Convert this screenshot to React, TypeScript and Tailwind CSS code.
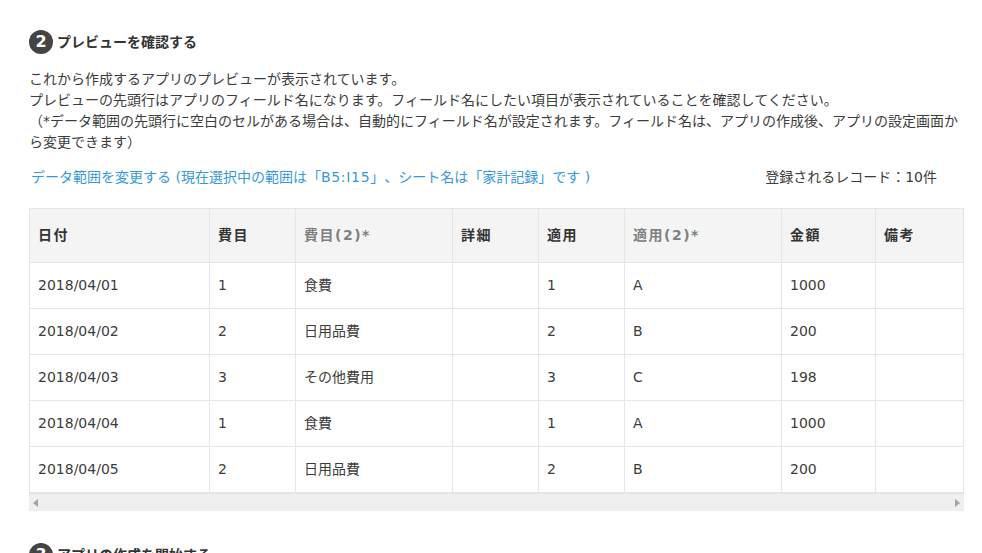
const font = "font-['DejaVu_Sans','Noto_Sans_CJK_JP',sans-serif]"

const columns = [
  { label: "日付", width: "w-[180px]" },
  { label: "費目", width: "w-[86px]" },
  { label: "費目(2)*", width: "w-[157px]", muted: true },
  { label: "詳細", width: "w-[86px]" },
  { label: "適用", width: "w-[86px]" },
  { label: "適用(2)*", width: "w-[157px]", muted: true },
  { label: "金額", width: "w-[94px]" },
  { label: "備考", width: "w-[88px]" },
]

const rows = [
  ["2018/04/01", "1", "食費", "", "1", "A", "1000", ""],
  ["2018/04/02", "2", "日用品費", "", "2", "B", "200", ""],
  ["2018/04/03", "3", "その他費用", "", "3", "C", "198", ""],
  ["2018/04/04", "1", "食費", "", "1", "A", "1000", ""],
  ["2018/04/05", "2", "日用品費", "", "2", "B", "200", ""],
]

function StepHeading({ n, title }: { n: number; title: string }) {
  return (
    <div className="flex items-center gap-1">
      <span className="flex h-6 w-6 items-center justify-center rounded-full bg-[#444444] text-base font-bold leading-none text-white">
        {n}
      </span>
      <h2 className="text-sm font-bold text-[#333333]">{title}</h2>
    </div>
  )
}

export default function App() {
  return (
    <div className={`h-[553px] overflow-hidden bg-white pl-[29px] pr-[18px] pt-[30px] text-sm text-[#3c3c3c] [text-spacing-trim:space-all] ${font}`}>
      <StepHeading n={2} title="プレビューを確認する" />

      <div className="mt-[15px] leading-[21px]">
        <p>これから作成するアプリのプレビューが表示されています。</p>
        <p>プレビューの先頭行はアプリのフィールド名になります。フィールド名にしたい項目が表示されていることを確認してください。</p>
        <p>（*データ範囲の先頭行に空白のセルがある場合は、自動的にフィールド名が設定されます。フィールド名は、アプリの作成後、アプリの設定画面から変更できます）</p>
      </div>

      <div className="mt-[14px] flex items-center justify-between pl-[2px] pr-[27px] leading-[21px]">
        <a className="text-[#3498db]">
          データ範囲を変更する (現在選択中の範囲は「<span className="tracking-[0.7px]">B5:I15</span>」、シート名は「家計記録」です )
        </a>
        <span>登録されるレコード：10件</span>
      </div>

      <div className="mt-[20px] w-[935px]">
        <table className="w-[934px] table-fixed border-collapse">
          <thead>
            <tr className="h-[54px] bg-[#f4f4f4]">
              {columns.map((col) => (
                <th
                  key={col.label}
                  className={`${col.width} border border-[#e6e6e6] px-2 pb-[1px] text-left font-bold tracking-[1.5px] ${col.muted ? "text-[#808080]" : "text-[#333333]"}`}
                >
                  {col.label}
                </th>
              ))}
            </tr>
          </thead>
          <tbody>
            {rows.map((row, i) => (
              <tr key={i} className="h-[46px]">
                {row.map((cell, j) => (
                  <td key={j} className="border border-[#e6e6e6] px-2 pb-[2px]">
                    {cell}
                  </td>
                ))}
              </tr>
            ))}
          </tbody>
        </table>
        <div className="flex h-[18px] items-center justify-between border-t border-[#e3e3e3] bg-[#efefef] px-1">
          <span className="h-0 w-0 border-y-[4px] border-r-[5px] border-y-transparent border-r-[#a3a3a3]" />
          <span className="h-0 w-0 border-y-[4px] border-l-[5px] border-y-transparent border-l-[#a3a3a3]" />
        </div>
      </div>

      <div className="mt-[32px]">
        <StepHeading n={3} title="アプリの作成を開始する" />
      </div>
    </div>
  )
}
